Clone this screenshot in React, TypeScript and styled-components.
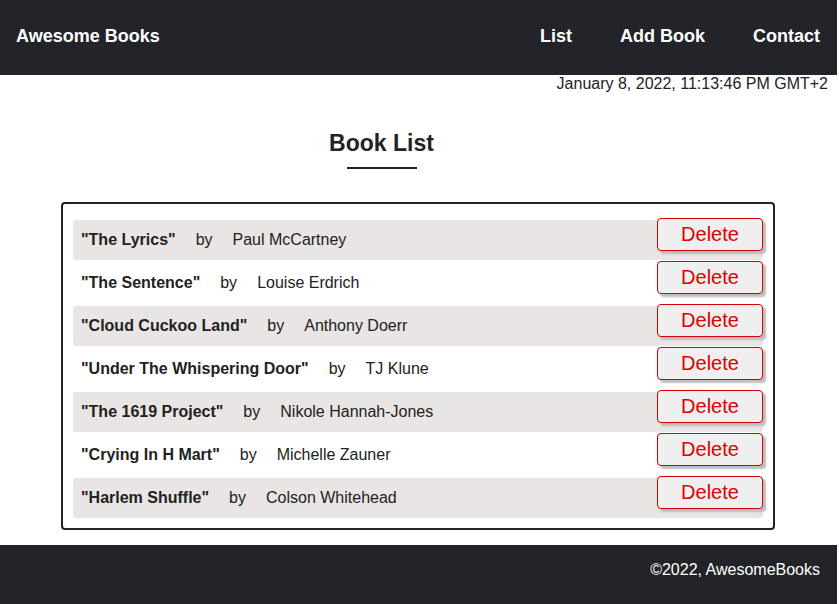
import React from 'react';
import styled, {createGlobalStyle} from 'styled-components';

const GlobalStyle = createGlobalStyle`
  body {
    margin: 0;
    font-family: "Liberation Sans", Arial, sans-serif;
    color: #222;
    background: white;
  }
`

const Page = styled.div`
  margin-right: 2px;
`

const Header = styled.header`
  height: 75px;
  background: #232429;
  display: flex;
  align-items: center;
  justify-content: space-between;
  padding: 0 17px 3px 16px;
  box-sizing: border-box;
`

const Brand = styled.h1`
  margin: 0;
  color: white;
  font-size: 18px;
  font-weight: bold;
`

const Nav = styled.nav`
  display: flex;
  gap: 48px;
  > a {
    color: white;
    font-size: 18px;
    font-weight: bold;
    text-decoration: none;
  }
`

const DateLine = styled.div`
  text-align: right;
  font-size: 16px;
  line-height: 18px;
  padding: 0 9px 0 0;
  color: #222;
`

const Title = styled.h2`
  margin: 36px 74px 0 0;
  text-align: center;
  font-size: 23px;
  line-height: 28px;
  color: #222;
  &::after {
    content: '';
    display: block;
    width: 70px;
    height: 2px;
    background: #222;
    margin: 10px auto 0;
  }
`

const ListBox = styled.ul`
  list-style: none;
  margin: 33px 62px 0 61px;
  padding: 16px 10px 10px;
  border: 2px solid #222;
  border-radius: 4px;
  display: flex;
  flex-direction: column;
  gap: 3px;
`

const Row = styled.li<{$shaded: boolean}>`
  height: 40px;
  display: flex;
  align-items: flex-start;
  padding-left: 8px;
  border-radius: 3px;
  background: ${p => p.$shaded ? '#e8e5e4' : 'transparent'};
  font-size: 16px;
`

const BookText = styled.span`
  display: flex;
  align-items: center;
  height: 40px;
  gap: 20px;
  margin-right: auto;
  > b {
    font-weight: bold;
  }
`

const DeleteButton = styled.button`
  margin-top: -2px;
  width: 106px;
  height: 33px;
  font-family: "Liberation Sans", Arial, sans-serif;
  font-size: 20px;
  color: #e00000;
  background: #efefef;
  border: 1px solid #d40000;
  border-radius: 4px;
  box-shadow: 3px 3px 2px #bdbdbd;
  cursor: pointer;
`

const Footer = styled.footer`
  margin-top: 15px;
  height: 59px;
  background: #232429;
  color: white;
  display: flex;
  align-items: center;
  justify-content: flex-end;
  padding: 0 17px 10px 0;
  box-sizing: border-box;
  font-size: 16px;
`

const books = [
  {title: 'The Lyrics', author: 'Paul McCartney'},
  {title: 'The Sentence', author: 'Louise Erdrich'},
  {title: 'Cloud Cuckoo Land', author: 'Anthony Doerr'},
  {title: 'Under The Whispering Door', author: 'TJ Klune'},
  {title: 'The 1619 Project', author: 'Nikole Hannah-Jones'},
  {title: 'Crying In H Mart', author: 'Michelle Zauner'},
  {title: 'Harlem Shuffle', author: 'Colson Whitehead'},
]

function App() {
  return (
    <Page>
      <GlobalStyle/>
      <Header>
        <Brand>Awesome Books</Brand>
        <Nav>
          <a href="#list">List</a>
          <a href="#add">Add Book</a>
          <a href="#contact">Contact</a>
        </Nav>
      </Header>
      <DateLine>January 8, 2022, 11:13:46 PM GMT+2</DateLine>
      <Title>Book List</Title>
      <ListBox>
        {books.map((book, index) =>
          <Row key={book.title} $shaded={index % 2 === 0}>
            <BookText>
              <b>"{book.title}"</b>
              <span>by</span>
              <span>{book.author}</span>
            </BookText>
            <DeleteButton>Delete</DeleteButton>
          </Row>
        )}
      </ListBox>
      <Footer>©2022, AwesomeBooks</Footer>
    </Page>
  );
}

export default App;
